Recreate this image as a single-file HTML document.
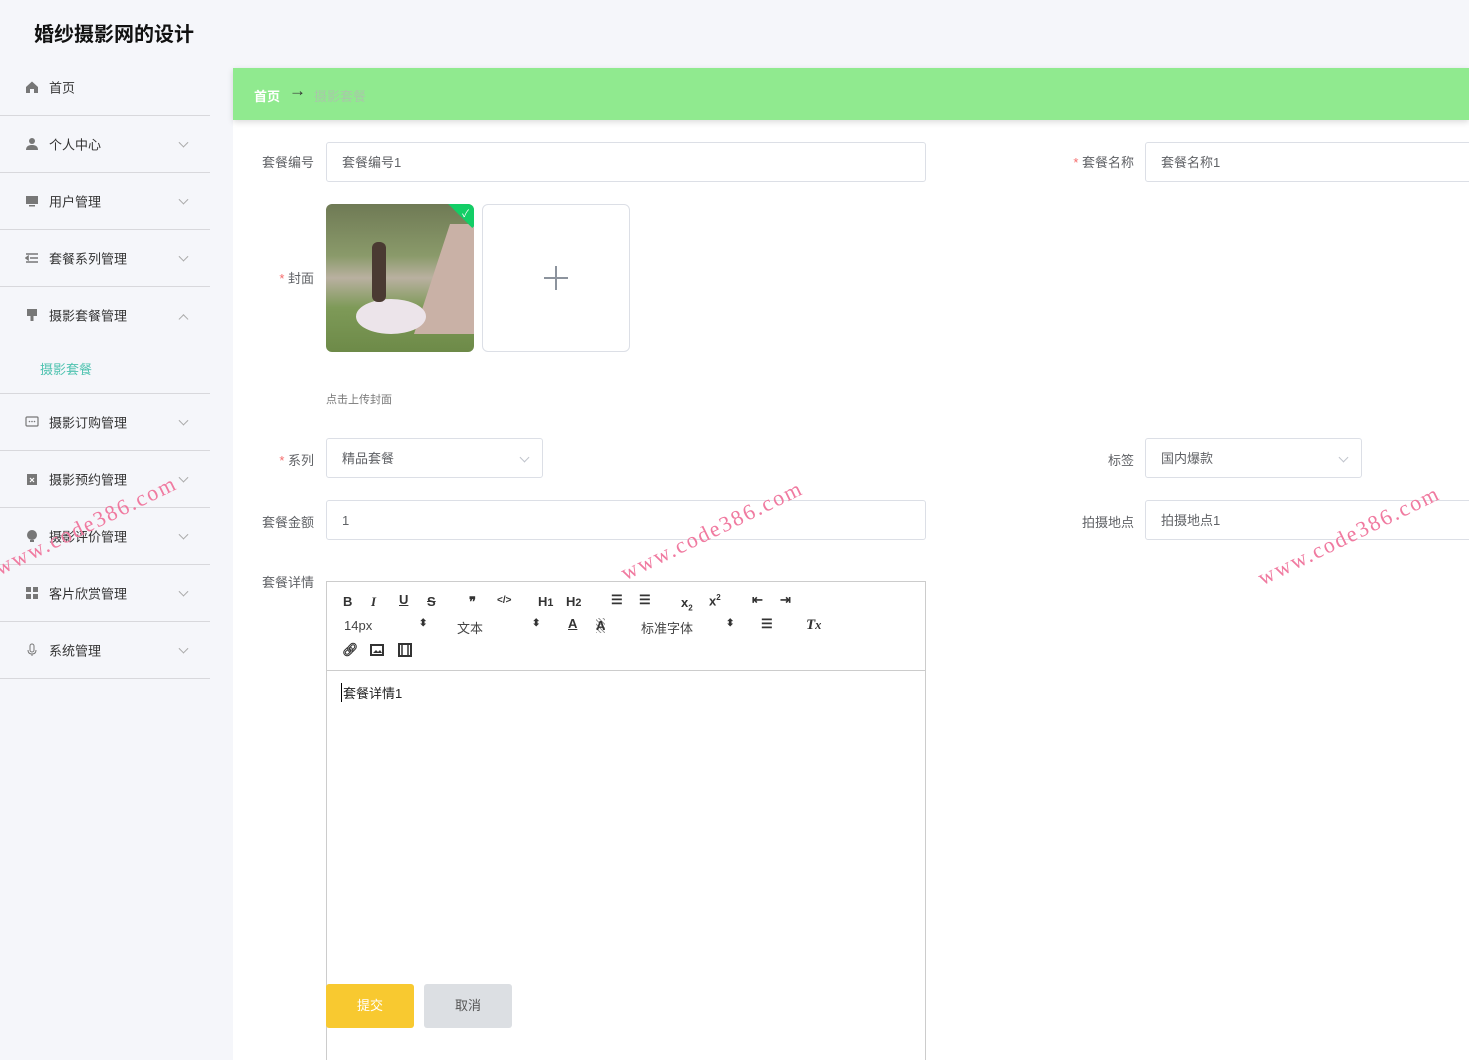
<!DOCTYPE html>
<html><head><meta charset="utf-8"><style>
*{margin:0;padding:0;box-sizing:border-box}
html,body{width:1469px;height:1060px;overflow:hidden}
body{background:#f5f6fa;font-family:"Liberation Sans","Noto Sans CJK SC",sans-serif;position:relative;color:#606266}
.abs{position:absolute}
.title{left:34px;top:18px;font-size:20px;font-weight:bold;color:#111}
.side .item{position:absolute;left:0;width:210px;height:57px;border-bottom:1px solid #d8d8dc;font-size:13px;color:#333}
.side .item span.t{position:absolute;left:49px;top:50%;transform:translateY(-50%)}
.side .item .ic{position:absolute;left:25px;top:50%;transform:translateY(-50%);width:14px;height:14px}
.side .item .ar{position:absolute;left:180px;top:50%;width:7px;height:7px;border-right:1px solid #aaa;border-bottom:1px solid #aaa;transform:translateY(-70%) rotate(45deg)}
.main{left:233px;top:68px;width:1236px;height:992px;background:#fff}
.bc{left:233px;top:68px;width:1236px;height:52px;background:#90ea8f;box-shadow:0 2px 6px rgba(0,0,0,.15);font-size:13px}
.lbl{font-size:13px;color:#606266;text-align:right;width:80px}
.inp{border:1px solid #dcdfe6;border-radius:3px;height:40px;background:#fff;font-size:13px;color:#606266;padding:13px 15px;line-height:14px}
.req{color:#f56c6c}
.tb{font-size:13px;color:#333;font-weight:bold}
.wm{color:#f07aa0;font-family:"Liberation Serif",serif;font-size:22px;letter-spacing:2px;transform:rotate(-26deg);transform-origin:left bottom;white-space:nowrap}
</style></head><body>
<div class="abs title">婚纱摄影网的设计</div>
<div class="side">
 <div class="item" style="top:59px"><svg class="ic" viewBox="0 0 14 14"><path d="M1 7L7 1.5 13 7V13H9V9H5V13H1Z" fill="#777"/></svg><span class="t">首页</span></div>
 <div class="item" style="top:116px"><svg class="ic" viewBox="0 0 14 14"><circle cx="7" cy="4" r="3" fill="#777"/><path d="M1 13c0-4 3-5 6-5s6 1 6 5z" fill="#777"/></svg><span class="t">个人中心</span><i class="ar"></i></div>
 <div class="item" style="top:173px"><svg class="ic" viewBox="0 0 14 14"><rect x="1" y="2" width="12" height="8" fill="#777"/><rect x="4" y="11" width="6" height="1.5" fill="#777"/></svg><span class="t">用户管理</span><i class="ar"></i></div>
 <div class="item" style="top:230px"><svg class="ic" viewBox="0 0 14 14"><path d="M1 3h12M5 7h8M1 11h12M1 7l2-1.5v3z" stroke="#777" stroke-width="1.6" fill="#777"/></svg><span class="t">套餐系列管理</span><i class="ar"></i></div>
 <div class="item" style="top:287px;height:107px"><svg class="ic" style="top:28px" viewBox="0 0 14 14"><rect x="2" y="1" width="10" height="7" fill="#777"/><rect x="5.5" y="8" width="3" height="5" fill="#777"/></svg><span class="t" style="top:28px">摄影套餐管理</span><i class="ar" style="top:30px;transform:translateY(-20%) rotate(-135deg)"></i><span class="abs" style="left:40px;top:72px;color:#4fc3b0">摄影套餐</span></div>
 <div class="item" style="top:394px"><svg class="ic" viewBox="0 0 14 14"><rect x="1" y="2" width="12" height="9" rx="1" fill="none" stroke="#777" stroke-width="1.2"/><circle cx="4.5" cy="6.5" r=".8" fill="#777"/><circle cx="7" cy="6.5" r=".8" fill="#777"/><circle cx="9.5" cy="6.5" r=".8" fill="#777"/></svg><span class="t">摄影订购管理</span><i class="ar"></i></div>
 <div class="item" style="top:451px"><svg class="ic" viewBox="0 0 14 14"><rect x="2" y="2" width="10" height="11" fill="#777"/><path d="M5 6l4 4M9 6l-4 4" stroke="#fff" stroke-width="1.2"/></svg><span class="t">摄影预约管理</span><i class="ar"></i></div>
 <div class="item" style="top:508px"><svg class="ic" viewBox="0 0 14 14"><circle cx="7" cy="6" r="5" fill="#777"/><rect x="5" y="11" width="4" height="2" fill="#777"/></svg><span class="t">摄影评价管理</span><i class="ar"></i></div>
 <div class="item" style="top:565px"><svg class="ic" viewBox="0 0 14 14"><rect x="1" y="1" width="5" height="5" fill="#777"/><rect x="8" y="1" width="5" height="5" fill="#777"/><rect x="1" y="8" width="5" height="5" fill="#777"/><rect x="8" y="8" width="5" height="5" fill="#777"/></svg><span class="t">客片欣赏管理</span><i class="ar"></i></div>
 <div class="item" style="top:622px"><svg class="ic" viewBox="0 0 14 14"><rect x="5" y="1" width="4" height="8" rx="2" fill="none" stroke="#777"/><path d="M3 7c0 3 2 4 4 4s4-1 4-4M7 11v2" stroke="#777" fill="none"/></svg><span class="t">系统管理</span><i class="ar"></i></div>
</div>
<div class="abs main"></div>
<div class="abs bc"><span class="abs" style="left:21px;top:18px;color:#fff;font-weight:bold">首页</span><span class="abs" style="left:56px;top:13px;color:#333;font-size:17px">→</span><span class="abs" style="left:81px;top:18px;color:#a8c8a8">摄影套餐</span></div>

<div class="abs lbl" style="left:234px;top:152px">套餐编号</div>
<div class="abs inp" style="left:326px;top:142px;width:600px">套餐编号1</div>
<div class="abs lbl" style="left:1054px;top:152px"><span class="req">* </span>套餐名称</div>
<div class="abs inp" style="left:1145px;top:142px;width:340px">套餐名称1</div>

<div class="abs lbl" style="left:234px;top:268px"><span class="req">* </span>封面</div>
<div class="abs" style="left:326px;top:204px;width:148px;height:148px;border-radius:6px;overflow:hidden;background:linear-gradient(180deg,#6f7a55 0%,#8a9a6a 35%,#b9b0a0 50%,#7e9a58 70%,#6d8a48 100%)">
 <div class="abs" style="left:88px;top:20px;width:60px;height:110px;background:#c9b1a6;clip-path:polygon(60% 0,100% 0,100% 100%,0 100%)"></div>
 <div class="abs" style="left:30px;top:95px;width:70px;height:35px;border-radius:50%;background:#ece4ea"></div>
 <div class="abs" style="left:46px;top:38px;width:14px;height:60px;background:#4a3a32;border-radius:6px"></div>
 <div class="abs" style="right:-14px;top:-14px;width:40px;height:28px;background:#13ce66;transform:rotate(45deg)"></div>
 <span class="abs" style="right:5px;top:1px;color:#fff;font-size:10px">✓</span>
</div>
<div class="abs" style="left:482px;top:204px;width:148px;height:148px;border:1px solid #dcdfe6;border-radius:6px;background:#fff"><span class="abs" style="left:61px;top:72px;width:24px;height:2px;background:#8c939d"></span><span class="abs" style="left:72px;top:61px;width:2px;height:24px;background:#8c939d"></span></div>
<div class="abs" style="left:326px;top:391px;font-size:11px;color:#777">点击上传封面</div>

<div class="abs lbl" style="left:234px;top:450px"><span class="req">* </span>系列</div>
<div class="abs inp" style="left:326px;top:438px;width:217px">精品套餐<i class="abs" style="right:14px;top:15px;width:7px;height:7px;border-right:1px solid #c0c4cc;border-bottom:1px solid #c0c4cc;transform:rotate(45deg)"></i></div>
<div class="abs lbl" style="left:1054px;top:450px">标签</div>
<div class="abs inp" style="left:1145px;top:438px;width:217px">国内爆款<i class="abs" style="right:14px;top:15px;width:7px;height:7px;border-right:1px solid #c0c4cc;border-bottom:1px solid #c0c4cc;transform:rotate(45deg)"></i></div>

<div class="abs lbl" style="left:234px;top:512px">套餐金额</div>
<div class="abs inp" style="left:326px;top:500px;width:600px">1</div>
<div class="abs lbl" style="left:1054px;top:512px">拍摄地点</div>
<div class="abs inp" style="left:1145px;top:500px;width:340px">拍摄地点1</div>

<div class="abs lbl" style="left:234px;top:572px">套餐详情</div>
<div class="abs" style="left:326px;top:581px;width:600px;height:479px;border:1px solid #ccc;border-bottom:none"></div>
<div class="abs" style="left:326px;top:670px;width:600px;height:1px;background:#ccc"></div>
<div class="tb">
<span class="abs" style="left:343px;top:594px">B</span>
<span class="abs" style="left:371px;top:594px;font-style:italic;font-family:'Liberation Serif'">I</span>
<span class="abs" style="left:399px;top:592px;text-decoration:underline">U</span>
<span class="abs" style="left:427px;top:594px;text-decoration:line-through">S</span>
<span class="abs" style="left:469px;top:594px">❞</span>
<span class="abs" style="left:497px;top:595px;font-size:10px">&lt;/&gt;</span>
<span class="abs" style="left:538px;top:594px">H<small>1</small></span>
<span class="abs" style="left:566px;top:594px">H<small>2</small></span>
<span class="abs" style="left:611px;top:592px">☰</span>
<span class="abs" style="left:639px;top:592px">☰</span>
<span class="abs" style="left:681px;top:595px">x<sub style="font-size:8px">2</sub></span>
<span class="abs" style="left:709px;top:593px">x<sup style="font-size:8px">2</sup></span>
<span class="abs" style="left:752px;top:592px">⇤</span>
<span class="abs" style="left:780px;top:592px">⇥</span>
<span class="abs" style="left:344px;top:618px;font-weight:normal;color:#444">14px</span>
<span class="abs" style="left:419px;top:618px;font-size:10px">⬍</span>
<span class="abs" style="left:457px;top:618px;font-weight:normal;color:#444">文本</span>
<span class="abs" style="left:532px;top:618px;font-size:10px">⬍</span>
<span class="abs" style="left:568px;top:616px;text-decoration:underline">A</span>
<span class="abs" style="left:596px;top:618px;background:repeating-linear-gradient(45deg,#999 0 1px,#fff 1px 3px)">A</span>
<span class="abs" style="left:641px;top:618px;font-weight:normal;color:#444">标准字体</span>
<span class="abs" style="left:726px;top:618px;font-size:10px">⬍</span>
<span class="abs" style="left:761px;top:616px">☰</span>
<span class="abs" style="left:806px;top:617px;font-style:italic;font-family:'Liberation Serif';font-size:15px">T<small>x</small></span>
<span class="abs" style="left:342px;top:642px">🔗︎</span>
<svg class="abs" style="left:370px;top:644px" width="14" height="12"><rect x="1" y="1" width="12" height="10" fill="none" stroke="#333" stroke-width="2"/><path d="M3 9l3-3 2 2 2-2 2 3z" fill="#333"/></svg>
<svg class="abs" style="left:398px;top:643px" width="14" height="14"><rect x="1" y="1" width="12" height="12" fill="none" stroke="#333" stroke-width="2"/><rect x="4" y="1" width="6" height="12" fill="none" stroke="#333" stroke-width="1.5"/></svg>
</div>
<div class="abs" style="left:341px;top:683px;font-size:13px;color:#222;border-left:1px solid #000;padding-left:1px">套餐详情1</div>

<div class="abs" style="left:326px;top:984px;width:88px;height:44px;background:#f8c930;border-radius:3px;color:#fff;font-size:13px;text-align:center;line-height:44px">提交</div>
<div class="abs" style="left:424px;top:984px;width:88px;height:44px;background:#dcdfe3;border-radius:3px;color:#555;font-size:13px;text-align:center;line-height:44px">取消</div>

<div class="abs wm" style="left:2px;top:555px">www.code386.com</div>
<div class="abs wm" style="left:628px;top:560px">www.code386.com</div>
<div class="abs wm" style="left:1265px;top:565px">www.code386.com</div>
</body></html>
